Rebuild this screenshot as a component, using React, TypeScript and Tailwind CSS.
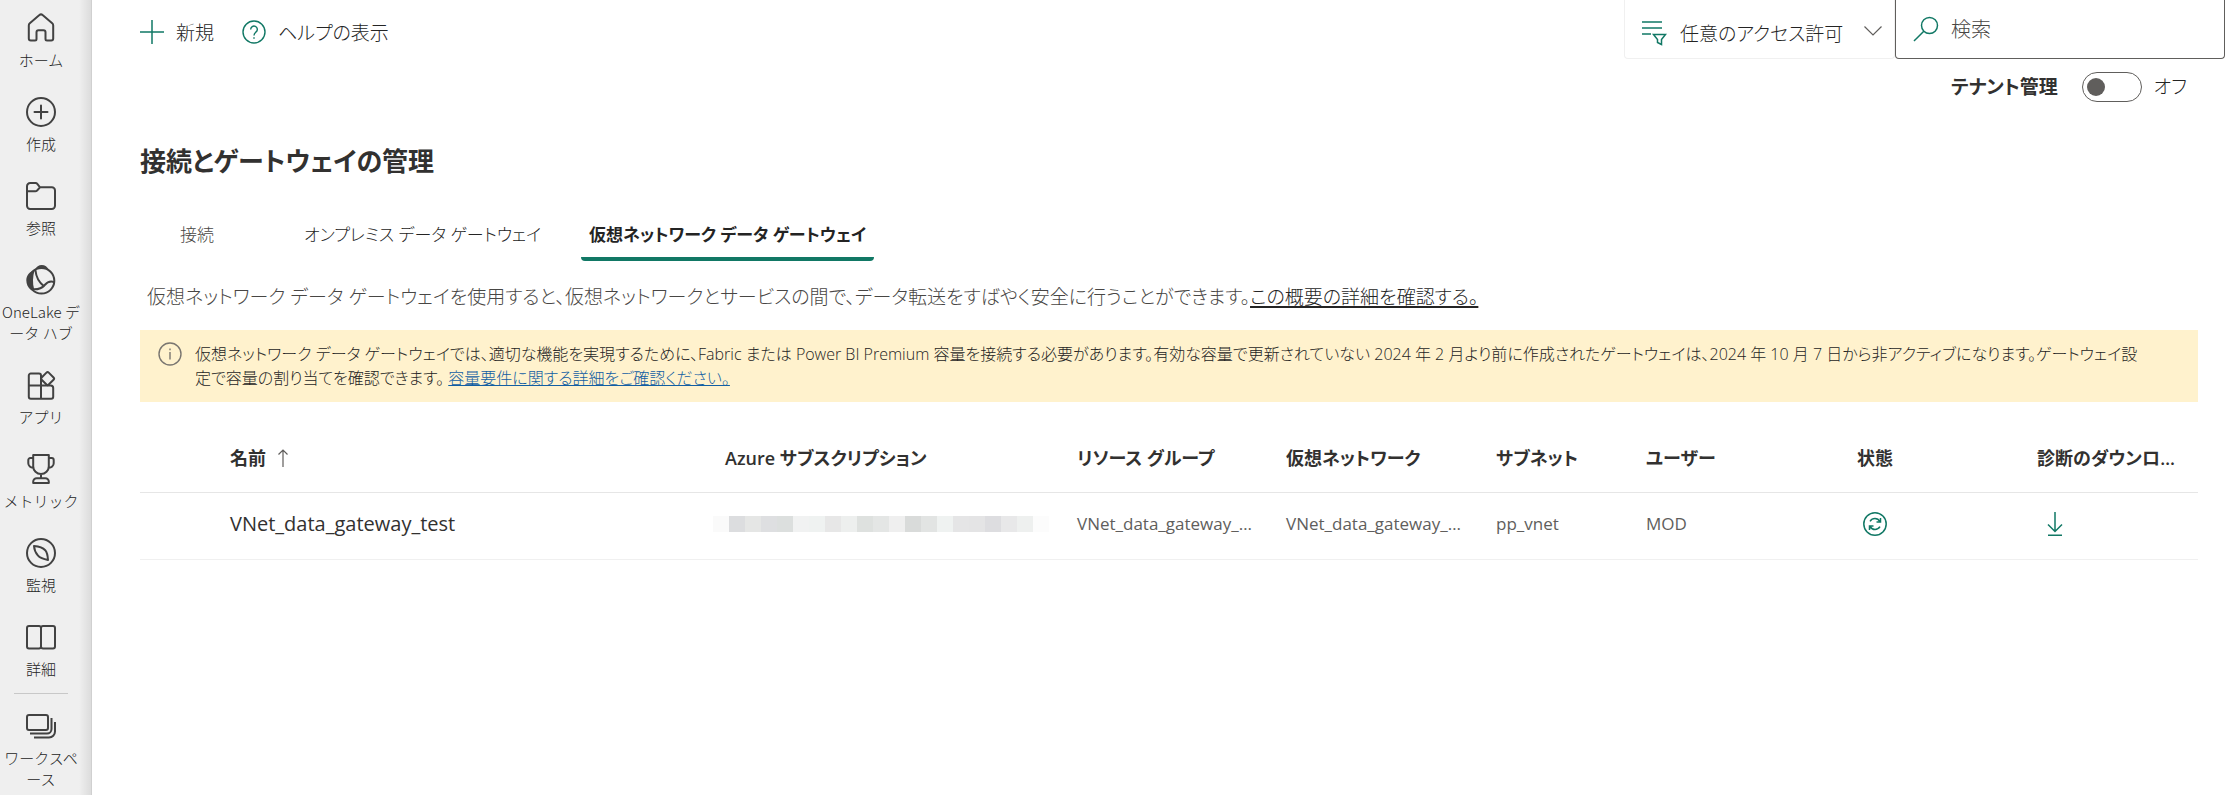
import React from 'react';

type IconProps = { children: React.ReactNode };

function NavIcon({ children }: IconProps) {
  return (
    <svg
      aria-hidden="true"
      viewBox="0 0 30 30"
      className="size-[30px] shrink-0"
      fill="none"
      stroke="#424242"
      strokeWidth="2"
      strokeLinejoin="round"
      strokeLinecap="round"
    >
      {children}
    </svg>
  );
}

const navItems: { id: string; label: React.ReactNode; icon: React.ReactNode }[] = [
  {
    id: 'home',
    label: 'ホーム',
    icon: (
      <path d="M13.4 2.1a2.4 2.4 0 0 1 3.2 0l9.6 8.2c.6.5 1 1.300 1 2.100V25.500a2 2 0 0 1-2 2h-4.200a1.500 1.500 0 0 1-1.500-1.500v-6.700a2 2 0 0 0-2-2h-5a2 2 0 0 0-2 2V26a1.500 1.500 0 0 1-1.500 1.500H4.800a2 2 0 0 1-2-2V12.400c0-.8.4-1.600 1-2.100z" />
    ),
  },
  {
    id: 'create',
    label: '作成',
    icon: (
      <>
        <circle cx="15" cy="15" r="14" />
        <path d="M15 8.500v13M8.500 15h13" />
      </>
    ),
  },
  {
    id: 'browse',
    label: '参照',
    icon: (
      <path d="M1 9.500V5.200A3.200 3.200 0 0 1 4.200 2h5.400c.7 0 1.300.3 1.700.8L14 6.300h11.800A3.200 3.200 0 0 1 29 9.500v15.300a3.200 3.200 0 0 1-3.200 3.200H4.200A3.200 3.200 0 0 1 1 24.800V9.500M1 10.300h8.300c.7 0 1.300-.3 1.800-.8L14 6.300" />
    ),
  },
  {
    id: 'onelake',
    label: (
      <>
        OneLake デ
        <br />
        ータ ハブ
      </>
    ),
    icon: (
      <>
        <circle cx="15.500" cy="15.800" r="12.800" />
        <path fill="#424242" stroke="none" d="M8.800 4.900C10.300 1.800 12.800 0 15.700 0c3.200 0 5.900 1.900 7.300 5.100-4.400-2.200-9.600-2.300-14.200-.2z" />
        <path fill="#424242" stroke="none" d="M8.600 5.200C3.300 6.500.3 10.700.3 15.300c0 4 1.600 7.300 4.700 9.700 1.200.4 2.200.2 3.200-.4C6.400 18.200 6.700 11.600 8.600 5.200z" />
        <path d="M9.500 5.500c.6 6.500 3.400 11.700 8.400 15.700M6.500 24.300c5.500.4 9.500-1 12.200-4.300 2.600-3 5.500-4.300 9.400-2.900" />
      </>
    ),
  },
  {
    id: 'apps',
    label: 'アプリ',
    icon: (
      <>
        <path d="M15 15.600V5.600a2 2 0 0 0-2-2H4.800a2 2 0 0 0-2 2v21.200a2 2 0 0 0 2 2h20.400a2 2 0 0 0 2-2v-8.700a2.500 2.500 0 0 0-2.500-2.500H2.800M15 15.600v13.200" />
        <rect x="16.600" y="3.600" width="10" height="10" rx="1.600" transform="rotate(45 21.600 8.600)" />
      </>
    ),
  },
  {
    id: 'metrics',
    label: 'メトリック',
    icon: (
      <path d="M7.200 1h15.600v11.200a7.800 7.800 0 0 1-15.600 0zM7.200 4H4.300a2 2 0 0 0-2 2v3.200a4.600 4.600 0 0 0 5 4.500M22.800 4h2.900a2 2 0 0 1 2 2v3.200a4.600 4.600 0 0 1-5 4.500M15 20v4.200M7.200 29v-1.300a3.500 3.500 0 0 1 3.500-3.500h8.600a3.500 3.500 0 0 1 3.500 3.500V29z" />
    ),
  },
  {
    id: 'monitor',
    label: '監視',
    icon: (
      <>
        <circle cx="15" cy="15" r="14" />
        <path d="M8 8c5 .5 8.800 1.600 11.200 4.200 2 2.300 2.500 5 2.800 9.800-4.600-.8-7.800-1.800-10.200-4.600C9.600 14.900 8.300 12 8 8z" />
      </>
    ),
  },
  {
    id: 'learn',
    label: '詳細',
    icon: (
      <path d="M15 5.800A2 2 0 0 0 13 4H3a2 2 0 0 0-2 2v18.500a2 2 0 0 0 2 2h10a2 2 0 0 0 2-1.800 2 2 0 0 0 2 1.800h10a2 2 0 0 0 2-2V6a2 2 0 0 0-2-2H17a2 2 0 0 0-2 1.800zM15 5.800v18.900" />
    ),
  },
];

function NavItem({ label, icon }: { label: React.ReactNode; icon: React.ReactNode }) {
  return (
    <a href="#" className="flex flex-col items-center gap-[6px] pt-[13px] pb-[14px] text-center text-[15px] leading-[21px] whitespace-nowrap text-[#242424]">
      <NavIcon>{icon}</NavIcon>
      <span>{label}</span>
    </a>
  );
}

function Sidebar() {
  return (
    <nav className="relative w-[92px] shrink-0 overflow-hidden border-r border-[#d0d0d0] bg-[#efefef] pr-[9px] font-['Noto_Sans_CJK_JP',sans-serif] font-light">
      {navItems.map((item) => (
        <NavItem key={item.id} label={item.label} icon={item.icon} />
      ))}
      <hr className="mx-[14px] mb-1 border-[#c8c8c8]" />
      <NavItem
        label={
          <>
            ワークスペ
            <br />
            ース
          </>
        }
        icon={
          <>
            <rect x="1" y="4" width="21" height="15" rx="2" />
            <path strokeLinecap="butt" d="M4 22.500h17a4.500 4.500 0 0 0 4.500-4.500V7M8 26.500h15a6 6 0 0 0 6-6V11" />
          </>
        }
      />
      <div className="absolute inset-y-0 right-0 w-3 bg-linear-to-r from-transparent to-black/8" />
    </nav>
  );
}

function Toolbar() {
  return (
    <div className="flex items-start justify-between pl-12">
      <div className="flex h-16 items-center gap-7 text-[19px] font-light text-[#242424]">
        <button type="button" className="flex items-center gap-3">
          <svg aria-hidden="true" viewBox="0 0 24 24" className="size-6" stroke="#117865" strokeWidth="1.500">
            <path d="M12 0v24M0 12h24" />
          </svg>
          <span className="pt-[2px]">新規</span>
        </button>
        <button type="button" className="flex items-center gap-3">
          <svg aria-hidden="true" viewBox="0 0 24 24" className="size-6" fill="none" stroke="#117865" strokeWidth="1.400">
            <circle cx="12" cy="12" r="11" />
            <path d="M8.700 9.400a3.300 3.300 0 1 1 5.400 2.500c-1.300 1.100-2.100 1.700-2.100 3.600M12 17.200v1.600" />
          </svg>
          <span className="pt-[2px]">ヘルプの表示</span>
        </button>
      </div>
      <div className="flex pr-[2px]">
        <div className="relative h-[59px] w-[271px] rounded-b border border-t-0 border-[#f0f0f0]">
          <svg aria-hidden="true" viewBox="0 0 26 26" className="absolute top-5 left-4 size-[26px]" fill="none" stroke="#117865" strokeWidth="1.500">
            <path d="M1 2h20M1 8h20M1 14h9M12.500 14.500h12l-4 5v5l-4-2v-3z" />
          </svg>
          <select aria-label="アクセス許可" className="h-full w-full appearance-none bg-transparent pt-[11px] pl-[55px] text-[19px] font-light text-[#242424]">
            <option>任意のアクセス許可</option>
          </select>
          <svg aria-hidden="true" viewBox="0 0 18 10" className="pointer-events-none absolute top-[26px] right-3 h-[10px] w-[18px]" fill="none" stroke="#605e5c" strokeWidth="1.200">
            <path d="M.5.500 9 9 17.500.500" />
          </svg>
        </div>
        <label className="flex h-[59px] w-[330px] items-center gap-3 rounded-b border border-t-0 border-[#605e5c] pl-[17px]">
          <svg aria-hidden="true" viewBox="0 0 26 26" className="size-[26px] shrink-0" fill="none" stroke="#117865" strokeWidth="1.500">
            <circle cx="16.500" cy="9.500" r="8" />
            <path d="M10.800 15.200 1 25" />
          </svg>
          <input type="search" aria-label="検索" placeholder="検索" className="min-w-0 flex-1 bg-transparent pt-[2px] text-xl font-light outline-none placeholder:text-[#484644]" />
        </label>
      </div>
    </div>
  );
}

function TenantToggle() {
  return (
    <div className="-mt-[5px] flex h-14 items-center justify-end pr-10 text-[19px] text-[#323130]">
      <label htmlFor="tenant" className="font-semibold">
        テナント管理
      </label>
      <input
        id="tenant"
        type="checkbox"
        role="switch"
        className="mr-3 ml-6 flex h-[30px] w-[60px] appearance-none items-center rounded-full border border-[#605e5c] px-1 before:size-[18px] before:rounded-full before:bg-[#605e5c]"
      />
      <span className="font-light text-[#242424]">オフ</span>
    </div>
  );
}

const mosaic = [
  'bg-[#fafafa]', 'bg-[#dcdddf]', 'bg-[#e5e6e5]', 'bg-[#dedfe1]', 'bg-[#dcdfde]', 'bg-[#f1f2f2]', 'bg-[#eff2f1]',
  'bg-[#e7e7e7]', 'bg-[#edefee]', 'bg-[#dee1df]', 'bg-[#e4e6e5]', 'bg-[#efefef]', 'bg-[#d9dbda]', 'bg-[#e2e4e3]',
  'bg-[#eff2f1]', 'bg-[#e5e5e6]', 'bg-[#e4e4e5]', 'bg-[#dddde0]', 'bg-[#e8e8e9]', 'bg-[#eef0ef]', 'bg-[#fcfcfc]',
];

function GatewayTable() {
  return (
    <table className="mt-6 w-full table-fixed text-left">
      <colgroup>
        <col className="w-[78px]" />
        <col className="w-[495px]" />
        <col className="w-[352px]" />
        <col className="w-[209px]" />
        <col className="w-[210px]" />
        <col className="w-[150px]" />
        <col className="w-[211px]" />
        <col className="w-[180px]" />
        <col className="w-[173px]" />
      </colgroup>
      <thead>
        <tr className="h-[66px] border-b border-[#e6e6e6] text-lg text-[#323130] [&>th]:truncate [&>th]:px-3 [&>th]:pb-[2px] [&>th]:font-semibold">
          <td />
          <th scope="col">
            <span className="flex items-center gap-3">
              名前
              <svg aria-hidden="true" viewBox="0 0 10 18" className="h-[18px] w-[10px]" fill="none" stroke="#605e5c" strokeWidth="1.200">
                <path d="M5 18V1M.5 5.500 5 1l4.500 4.500" />
              </svg>
            </span>
          </th>
          <th scope="col">Azure サブスクリプション</th>
          <th scope="col">リソース グループ</th>
          <th scope="col">仮想ネットワーク</th>
          <th scope="col">サブネット</th>
          <th scope="col">ユーザー</th>
          <th scope="col">状態</th>
          <th scope="col">診断のダウンロード</th>
        </tr>
      </thead>
      <tbody>
        <tr className="h-[67px] border-b border-[#f0f0f0] text-[17px] text-[#605e5c] [&>td]:truncate [&>td]:pt-0 [&>td]:pr-5 [&>td]:pb-1 [&>td]:pl-3">
          <td />
          <td className="text-xl text-[#323130]">VNet_data_gateway_test</td>
          <td>
            <div className="-mr-5 -ml-3 flex">
              {mosaic.map((shade, i) => (
                <span key={i} className={`size-4 shrink-0 ${shade}`} />
              ))}
            </div>
          </td>
          <td>VNet_data_gateway_test_rg</td>
          <td>VNet_data_gateway_test_vnet</td>
          <td>pp_vnet</td>
          <td>MOD</td>
          <td>
            <button type="button" aria-label="状態" className="ml-[6px] block">
              <svg aria-hidden="true" viewBox="0 0 24 24" className="size-6" fill="none" stroke="#117865" strokeWidth="1.500">
                <circle cx="12" cy="12" r="11.200" />
                <path d="M7 9.300C9.500 5.500 14.500 5.500 17 9.500M17.500 6v4h-4M17 14.700c-2.500 3.800-7.500 3.800-10-.2M6.500 18v-4h4" />
              </svg>
            </button>
          </td>
          <td>
            <button type="button" aria-label="ダウンロード" className="ml-[10px] block">
              <svg aria-hidden="true" viewBox="0 0 16 24" className="h-6 w-4" fill="none" stroke="#117865" strokeWidth="1.500">
                <path d="M8 0v19M1 12.500l7 7 7-7M1 23.200h14" />
              </svg>
            </button>
          </td>
        </tr>
      </tbody>
    </table>
  );
}

export default function App() {
  return (
    <div
      lang="ja"
      className="flex h-screen overflow-hidden bg-white font-['Open_Sans','Noto_Sans_CJK_JP',sans-serif]"
    >
      <Sidebar />
      <div className="flex min-w-0 flex-1 flex-col [font-feature-settings:'palt']">
        <Toolbar />
        <TenantToggle />
        <main className="pr-[29px] pl-12">
          <h1 className="mt-6 text-[26px] leading-[44px] font-semibold text-[#323130]">接続とゲートウェイの管理</h1>
          <div role="tablist" className="mt-6 flex h-[54px] items-stretch gap-[34px] pl-8 text-[17px] text-[#242424]">
            <button type="button" role="tab" className="mr-[42px] px-2 pt-[2px] font-light text-[#484644]">接続</button>
            <button type="button" role="tab" className="px-[6px] pt-[2px] font-light">オンプレミス データ ゲートウェイ</button>
            <button type="button" role="tab" aria-selected="true" className="relative px-2 pt-[2px] font-semibold">
              仮想ネットワーク データ ゲートウェイ
              <span className="absolute inset-x-0 bottom-0 h-1 rounded-b bg-[#117865]" />
            </button>
          </div>
          <p className="mt-5 pl-[7px] text-[19px] leading-8 font-light text-[#484644]">
            仮想ネットワーク データ ゲートウェイを使用すると、仮想ネットワークとサービスの間で、データ転送をすばやく安全に行うことができます。
            <a href="#" className="text-[#242424] underline decoration-2 underline-offset-2">この概要の詳細を確認する。</a>
          </p>
          <div role="status" className="mt-[17px] flex gap-[13px] bg-[#fff2cd] py-3 pr-[46px] pl-[18px] text-base leading-6 font-light text-[#242424]">
            <svg aria-hidden="true" viewBox="0 0 24 24" className="size-6 shrink-0" fill="none" stroke="#7a7670" strokeWidth="1.400">
              <circle cx="12" cy="12" r="11" />
              <path d="M12 10v7.500M12 6.500v1.800" />
            </svg>
            <p>
              仮想ネットワーク データ ゲートウェイでは、適切な機能を実現するために、Fabric または Power BI Premium 容量を接続する必要があります。有効な容量で更新されていない 2024 年 2 月より前に作成されたゲートウェイは、2024 年 10 月 7 日から非アクティブになります。ゲートウェイ設定で容量の割り当てを確認できます。{' '}
              <a href="#" className="text-[#115ea3] underline">容量要件に関する詳細をご確認ください。</a>
            </p>
          </div>
          <GatewayTable />
        </main>
      </div>
    </div>
  );
}
